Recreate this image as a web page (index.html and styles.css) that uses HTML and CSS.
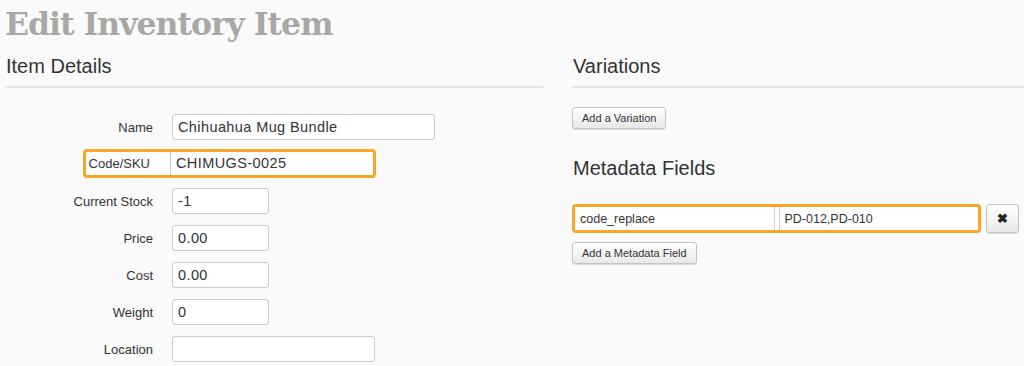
FILE: index.html
```html
<!DOCTYPE html>
<html lang="en">
<head>
    <meta charset="utf-8">
    <title>Edit Inventory Item</title>
    <link rel="stylesheet" href="styles.css">
</head>
<body>
<div class="page">
    <h1>Edit Inventory Item</h1>
    <div class="columns">
        <div class="col-left">
            <h2 class="section">Item Details</h2>
            <form class="details">
                <div class="field">
                    <label>Name</label>
                    <input class="wide" type="text" value="Chihuahua Mug Bundle">
                </div>
                <div class="field marked">
                    <div class="mark">
                        <label>Code/SKU</label>
                        <input type="text" value="CHIMUGS-0025">
                    </div>
                </div>
                <div class="field">
                    <label>Current Stock</label>
                    <input class="short" type="text" value="-1">
                </div>
                <div class="field">
                    <label>Price</label>
                    <input class="short" type="text" value="0.00">
                </div>
                <div class="field">
                    <label>Cost</label>
                    <input class="short" type="text" value="0.00">
                </div>
                <div class="field">
                    <label>Weight</label>
                    <input class="short" type="text" value="0">
                </div>
                <div class="field">
                    <label>Location</label>
                    <input class="loc" type="text" value="">
                </div>
            </form>
        </div>
        <div class="col-right">
            <h2 class="section">Variations</h2>
            <button class="btn" type="button">Add a Variation</button>
            <h2 class="section plain">Metadata Fields</h2>
            <div class="meta-row">
                <div class="mark meta">
                    <input type="text" value="code_replace">
                    <input type="text" value="PD-012,PD-010">
                </div>
                <button class="btn remove" type="button">&#10006;</button>
            </div>
            <button class="btn" type="button">Add a Metadata Field</button>
        </div>
    </div>
</div>
</body>
</html>
```

FILE: styles.css
```css
html, body {
    margin: 0;
    background: #fafafa;
}

body {
    font: 13px "Liberation Sans", Arial, sans-serif;
    color: #333;
    overflow: hidden;
}

.page {
    padding: 0 0 0 5px;
}

h1 {
    margin: 0;
    height: 46px;
    font: bold 31.5px/48px "DejaVu Serif", serif;
    letter-spacing: -1px;
    color: #a9a8a4;
}

.columns {
    display: grid;
    grid-template-columns: 538px 1fr;
    column-gap: 29px;
}

.section {
    margin: 0;
    padding: 9px 0 8px 1px;
    font: 20px/23px "Liberation Sans", Arial, sans-serif;
    color: #333;
    border-bottom: 2px solid #e6e6e6;
}

.section.plain {
    border-bottom: 0;
    margin-top: 19px;
    padding-bottom: 24px;
}

.details {
    padding-top: 26px;
}

.field {
    display: flex;
    align-items: center;
    height: 26px;
    margin-bottom: 11px;
}

.field label {
    width: 148px;
    padding-right: 19px;
    text-align: right;
    flex: none;
}

input {
    box-sizing: border-box;
    height: 26px;
    padding: 0 5px;
    font: 14.5px "Liberation Sans", Arial, sans-serif;
    letter-spacing: 0.4px;
    color: #333;
    background: #fff;
    border: 1px solid #ccc;
    border-radius: 3px;
    outline: none;
}

input.wide { width: 263px; }
input.short { width: 97px; }
input.loc { width: 203px; }

.mark {
    display: flex;
    box-sizing: border-box;
    height: 29px;
    background: #fff;
    border: 3px solid #f8a724;
    border-radius: 4px;
}

.field.marked {
    margin-top: -1px;
    margin-bottom: 12px;
}

.field .mark {
    margin-left: 78px;
    width: 293px;
    align-items: center;
}

.field .mark label {
    width: 64px;
    padding-right: 20px;
}

.field .mark input {
    height: 23px;
    width: 204px;
    padding-left: 5px;
    border-width: 0 0 0 1px;
    border-radius: 0;
}

.btn {
    display: block;
    height: 22px;
    padding: 0 9px;
    font: 11px "Liberation Sans", Arial, sans-serif;
    color: #333;
    background: linear-gradient(#fff, #e8e8e8);
    border: 1px solid #c4c4c4;
    border-radius: 3px;
    box-shadow: 0 1px 1px rgba(0, 0, 0, 0.12);
}

.col-right > .btn:first-of-type {
    margin-top: 19px;
}

.meta-row {
    display: flex;
    gap: 5px;
    margin-bottom: 9px;
}

.mark.meta {
    width: 409px;
    gap: 4px;
}

.mark.meta input {
    flex: 1;
    min-width: 0;
    height: 23px;
    font-size: 12.5px;
    letter-spacing: 0;
    border-width: 0 1px;
    border-radius: 0;
}

.mark.meta input:first-child {
    border-left: 0;
}

.mark.meta input:last-child {
    border-right: 0;
}

.btn.remove {
    width: 33px;
    height: 29px;
    padding: 0;
    font-size: 13px;
    font-weight: bold;
    color: #222;
}
```
